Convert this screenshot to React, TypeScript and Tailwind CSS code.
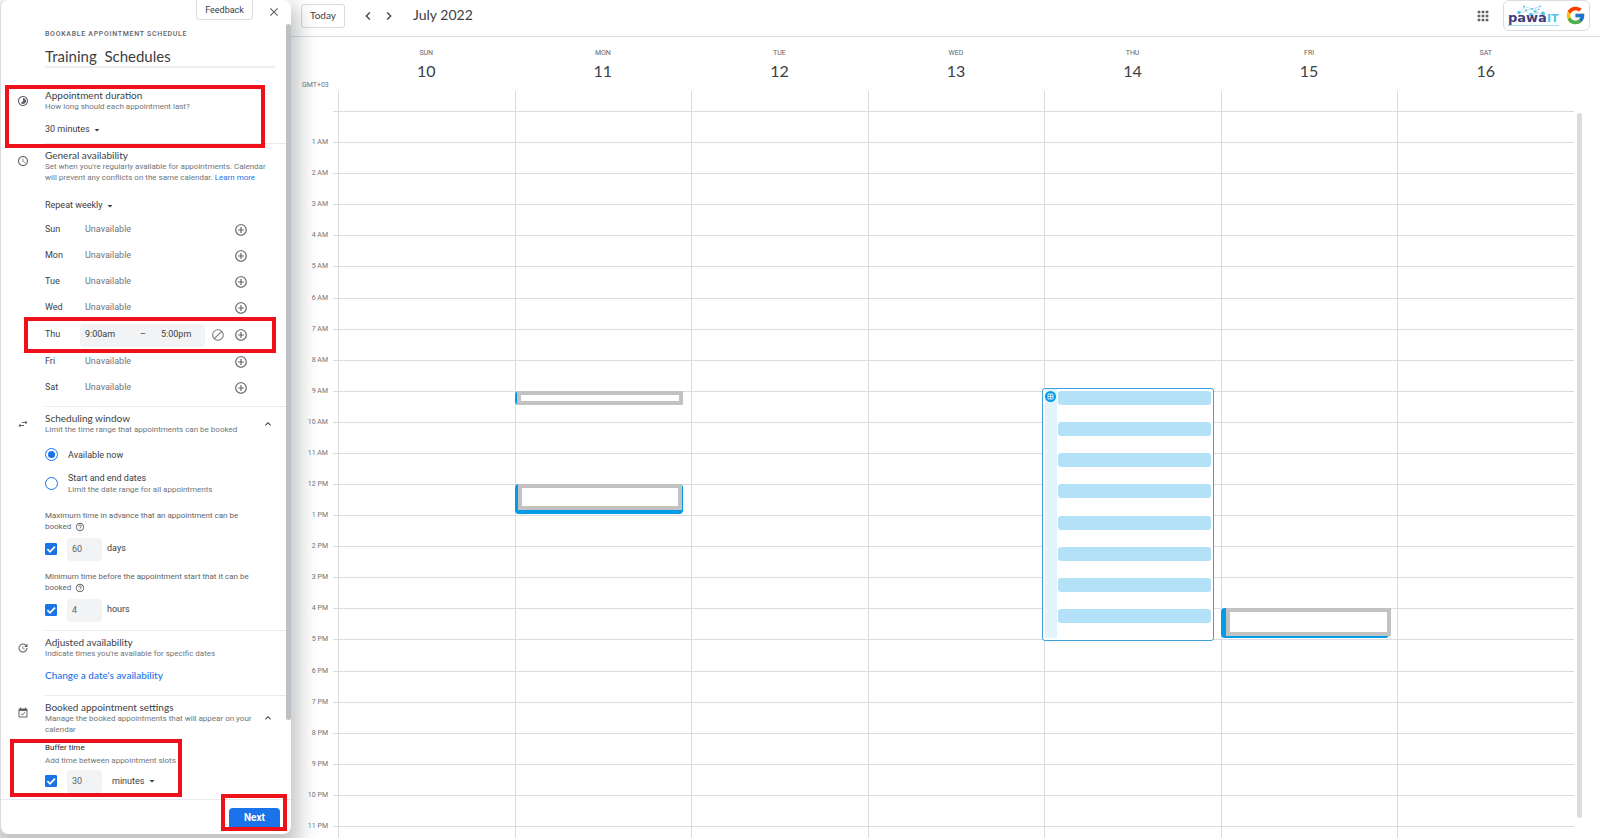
import { useState, type ReactNode } from "react";
import clsx from "clsx";
import { FcGoogle } from "react-icons/fc";
import {
  MdAccessTime,
  MdAddCircleOutline,
  MdApps,
  MdArrowDropDown,
  MdBlock,
  MdChevronLeft,
  MdChevronRight,
  MdClose,
  MdEventAvailable,
  MdExpandLess,
  MdHelpOutline,
  MdSwapHoriz,
  MdTimelapse,
  MdUpdate,
} from "react-icons/md";

/* ---------- Data ---------- */
const DAYS = [
  { name: "SUN", date: 10 },
  { name: "MON", date: 11 },
  { name: "TUE", date: 12 },
  { name: "WED", date: 13 },
  { name: "THU", date: 14 },
  { name: "FRI", date: 15 },
  { name: "SAT", date: 16 },
];

const WEEK = ["Sun", "Mon", "Tue", "Wed", "Thu", "Fri", "Sat"];

const HOURS = Array.from({ length: 24 }, (_, h) => {
  if (h === 0) return "";
  return `${h % 12 || 12} ${h < 12 ? "AM" : "PM"}`;
});

interface CalendarEvent {
  day: string;
  start: number;
  end: number;
  frame: string;
  inner: string;
}

const EVENTS: CalendarEvent[] = [
  { day: "MON", start: 9, end: 9.5, frame: "right-2 pl-0.5", inner: "" },
  { day: "MON", start: 12, end: 13, frame: "right-2 pl-[3px] pb-1 pr-px", inner: "" },
  { day: "FRI", start: 16, end: 17, frame: "right-2 pl-[5px] pb-0.5", inner: "-mr-0.5" },
];

const percent = (hours: number) => `${(hours / 24) * 100}%`;

/* ---------- Small parts ---------- */
function Highlight({ className }: { className: string }) {
  return (
    <div
      className={clsx("pointer-events-none absolute z-10 border-4 border-[#ee1119]", className)}
      aria-hidden="true"
    />
  );
}

function Section({
  icon,
  title,
  description,
  collapsible,
  className,
  children,
}: {
  icon: ReactNode;
  title: string;
  description: ReactNode;
  collapsible?: boolean;
  className?: string;
  children: ReactNode;
}) {
  return (
    <section className="relative flex gap-4 pl-4">
      <span className="mt-[11px] h-3 w-3 shrink-0 text-xs text-[#5f6368]">{icon}</span>
      <div className={clsx("min-w-0 flex-1 border-[#e8eaed] pt-[5px]", className)}>
        <div className="flex items-center justify-between pr-3">
          <div className="min-w-0 flex-1">
            <h2 className="font-['Lato','Liberation_Sans',sans-serif] text-[10px] leading-3 text-[#3c4043]">
              {title}
            </h2>
            <p className="text-[8px] leading-[11px] text-[#70757a]">{description}</p>
          </div>
          {collapsible && (
            <button type="button" aria-label={`Collapse ${title}`} className="text-xs text-[#3c4043]">
              <MdExpandLess />
            </button>
          )}
        </div>
        {children}
      </div>
    </section>
  );
}

function Dropdown({ label, options, className }: { label: string; options: string[]; className: string }) {
  return (
    <div className={clsx("relative flex h-[13px] items-center text-[#3c4043]", className)}>
      <select
        aria-label={label}
        className="h-[13px] w-full appearance-none bg-transparent text-[9px] leading-[13px] outline-none"
      >
        {options.map((o) => (
          <option key={o}>{o}</option>
        ))}
      </select>
      <MdArrowDropDown className="pointer-events-none absolute right-0 text-xs" />
    </div>
  );
}

function CheckBox({ label }: { label: string }) {
  const [checked, setChecked] = useState(true);
  return (
    <span className="relative flex h-3 w-3 shrink-0">
      <input
        type="checkbox"
        aria-label={label}
        checked={checked}
        onChange={(e) => setChecked(e.target.checked)}
        className="h-3 w-3 appearance-none rounded-[1px] border border-[#1a73e8] checked:bg-[#1a73e8]"
      />
      {checked && (
        <svg viewBox="0 0 12 12" className="pointer-events-none absolute inset-0 h-3 w-3">
          <path d="M2.4 6.2 5 8.8 10 3.6" fill="none" stroke="#fff" strokeWidth="1.8" />
        </svg>
      )}
    </span>
  );
}

function AmountRow({
  label,
  value,
  className,
  children,
}: {
  label: string;
  value: string;
  className: string;
  children: ReactNode;
}) {
  return (
    <div className={clsx("flex h-6 items-center text-[9px] text-[#3c4043]", className)}>
      <CheckBox label={label} />
      <input
        type="text"
        aria-label={`${label} value`}
        defaultValue={value}
        className="ml-2.5 h-[23px] w-[35px] rounded-sm bg-[#f1f3f4] pl-[5px] text-[9px] text-[#5f6368] outline-none"
      />
      {children}
    </div>
  );
}

function Radio({ name, id, defaultChecked }: { name: string; id: string; defaultChecked?: boolean }) {
  return (
    <input
      type="radio"
      name={name}
      id={id}
      defaultChecked={defaultChecked}
      className="h-[13px] w-[13px] shrink-0 appearance-none rounded-full border border-[#1a73e8] bg-white p-0.5 checked:bg-[#1a73e8] checked:bg-clip-content"
    />
  );
}

/* ---------- Side panel ---------- */
function WeekRow({ day }: { day: string }) {
  const open = day === "Thu";
  return (
    <li className={clsx("relative flex items-center text-[9px] text-[#5f6368]", open ? "h-7" : "h-[26px]")}>
      <span className={clsx("text-[#3c4043]", open ? "w-[35px]" : "w-10")}>{day}</span>
      {open ? (
        <>
          <div className="flex h-[23px] w-[125px] items-center rounded-sm bg-[#f1f3f4] pl-[5px] text-[#3c4043]">
            <input
              aria-label="Start time"
              defaultValue="9:00am"
              className="w-[55px] bg-transparent text-[9px] outline-none"
            />
            <span className="w-[21px]">–</span>
            <input
              aria-label="End time"
              defaultValue="5:00pm"
              className="w-[38px] bg-transparent text-[9px] outline-none"
            />
          </div>
          <button type="button" aria-label="Unavailable all day" className="ml-1.5 text-sm text-[#80868b]">
            <MdBlock />
          </button>
        </>
      ) : (
        <span className="text-[#70757a]">Unavailable</span>
      )}
      <button
        type="button"
        aria-label={`Add another period to ${day}`}
        className="mr-[38px] ml-auto text-sm text-[#5f6368]"
      >
        <MdAddCircleOutline />
      </button>
      {open && <Highlight className="-top-1 right-[10px] -left-[21px] h-9" />}
    </li>
  );
}

function HelpIcon() {
  return <MdHelpOutline className="ml-0.5 inline text-[10px] text-[#5f6368]" />;
}

function SchedulePanel() {
  return (
    <aside className="relative z-10 flex h-[calc(100vh-4px)] w-[291px] shrink-0 flex-col rounded-lg border-l border-[#dadce0] bg-white shadow-[0_12px_20px_8px_rgba(60,64,67,0.3)]">
      <div className="flex min-h-0 flex-1 overflow-hidden">
        <div className="min-w-0 flex-1">
          <div className="flex h-7 items-start justify-end gap-3.5">
            <button
              type="button"
              className="h-5 w-[57px] rounded-b border border-t-0 border-[#dadce0] text-[9px] leading-4 text-[#3c4043]"
            >
              Feedback
            </button>
            <button type="button" aria-label="Close" className="mt-[5px] mr-[5px] text-sm text-[#5f6368]">
              <MdClose />
            </button>
          </div>
          <div className="pr-[11px] pl-11">
            <label
              htmlFor="schedule-title"
              className="block text-[7px] leading-3 font-medium tracking-widest text-[#5f6368]"
            >
              BOOKABLE APPOINTMENT SCHEDULE
            </label>
            <input
              id="schedule-title"
              defaultValue="Training  Schedules"
              className="mt-[7px] block h-[21px] w-full border-b-2 border-[#eceef0] font-['Lato','Liberation_Sans',sans-serif] text-[15px] text-[#3c4043] outline-none"
            />
          </div>

          <div className="mt-4">
            <Section
              icon={<MdTimelapse />}
              title="Appointment duration"
              description="How long should each appointment last?"
              className="border-b pb-[7px]"
            >
              <Dropdown
                label="Appointment duration"
                options={["30 minutes", "45 minutes", "1 hour"]}
                className="mt-[11px] w-[58px]"
              />
              <Highlight className="top-px left-1 h-[63px] w-[260px]" />
            </Section>

            <Section
              icon={<MdAccessTime />}
              title="General availability"
              description={
                <>
                  Set when you&apos;re regularly available for appointments. Calendar
                  <br />
                  will prevent any conflicts on the same calendar.{" "}
                  <a href="#learn-more" className="text-[#1a73e8]">
                    Learn more
                  </a>
                </>
              }
              className="border-b pb-[5px]"
            >
              <Dropdown
                label="Repeat"
                options={["Repeat weekly", "Does not repeat", "Custom"]}
                className="mt-4 w-[71px]"
              />
              <ul className="mt-[5px]">
                {WEEK.map((day) => (
                  <WeekRow key={day} day={day} />
                ))}
              </ul>
            </Section>

            <Section
              icon={<MdSwapHoriz />}
              title="Scheduling window"
              description="Limit the time range that appointments can be booked"
              collapsible
              className="border-b pb-2"
            >
              <div className="mt-[13px] flex items-center gap-[10px]">
                <Radio name="window" id="window-now" defaultChecked />
                <label htmlFor="window-now" className="text-[9px] leading-3 text-[#3c4043]">
                  Available now
                </label>
              </div>
              <div className="mt-[11px] flex items-center gap-[10px]">
                <Radio name="window" id="window-dates" />
                <label htmlFor="window-dates" className="text-[9px] leading-3 text-[#3c4043]">
                  Start and end dates
                  <span className="block text-[8px] leading-[11px] text-[#70757a]">
                    Limit the date range for all appointments
                  </span>
                </label>
              </div>
              <p className="mt-[15px] pr-8 text-[8px] leading-[11px] text-[#5f6368]">
                Maximum time in advance that an appointment can be booked <HelpIcon />
              </p>
              <AmountRow label="Maximum time in advance" value="60" className="mt-[5px]">
                <span className="ml-[5px]">days</span>
              </AmountRow>
              <p className="mt-2.5 pr-7 text-[8px] leading-[11px] text-[#5f6368]">
                Minimum time before the appointment start that it can be booked <HelpIcon />
              </p>
              <AmountRow label="Minimum time before" value="4" className="mt-[5px]">
                <span className="ml-[5px]">hours</span>
              </AmountRow>
            </Section>

            <Section
              icon={<MdUpdate />}
              title="Adjusted availability"
              description="Indicate times you're available for specific dates"
              className="border-b pb-3.5"
            >
              <a
                href="#change-date"
                className="mt-[10px] block font-['Lato','Liberation_Sans',sans-serif] text-[10px] leading-3 font-medium text-[#1a73e8]"
              >
                Change a date&apos;s availability
              </a>
            </Section>

            <Section
              icon={<MdEventAvailable />}
              title="Booked appointment settings"
              description="Manage the booked appointments that will appear on your calendar"
              collapsible
            >
              <h3 className="mt-[7px] text-[8px] leading-3 text-[#202124]">Buffer time</h3>
              <p className="mt-px text-[8px] leading-3 text-[#70757a]">Add time between appointment slots</p>
              <AmountRow label="Buffer time" value="30" className="mt-0.5">
                <Dropdown label="Buffer unit" options={["minutes", "hours"]} className="ml-2.5 w-[46px]" />
              </AmountRow>
              <Highlight className="top-[43px] left-[9px] h-[58px] w-[172px]" />
            </Section>
          </div>
        </div>
        <div className="mt-6 w-[5px] shrink-0">
          <div className="h-[696px] rounded-full bg-[#bdc1c6]" />
        </div>
      </div>

      <footer className="flex h-[35px] shrink-0 justify-end border-t border-[#e8eaed] pt-1 pr-[11px]">
        <div className="relative">
          <button
            type="button"
            className="h-[22px] w-[51px] rounded-sm bg-[#1a73e8] pb-0.5 text-[10px] font-bold text-white"
          >
            Next
          </button>
          <Highlight className="-top-[10px] -left-2 h-[37px] w-[66px]" />
        </div>
      </footer>
    </aside>
  );
}

/* ---------- Calendar ---------- */
function PawaLogo() {
  return (
    <svg viewBox="0 0 52 22" className="h-[22px] w-[52px]" role="img" aria-label="pawa IT">
      <g stroke="#8fd3ee" strokeWidth="0.6" fill="none">
        <path d="M11 8 18 6 23 11 27 7 35 9M18 2 24 4 31 2M18 6 24 4 27 7 31 3M11 8 17 2M23 11 30 8M27 3 30 8" />
      </g>
      <g fill="#55c3ea">
        <circle cx="11" cy="7.500" r="1.7" />
        <circle cx="18" cy="5" r="1" />
        <circle cx="23" cy="9.500" r="1.8" />
        <circle cx="27" cy="6.500" r="1.3" />
        <circle cx="35" cy="8.500" r="2" />
        <circle cx="16" cy="1.500" r="1" />
        <circle cx="24" cy="4" r="0.9" />
        <circle cx="32" cy="1.300" r="0.9" />
        <circle cx="31" cy="4.500" r="0.8" />
      </g>
      <text x="0" y="17" fontSize="13" fontWeight="700" fill="#3f3d7d" fontFamily="DejaVu Sans, sans-serif">
        pawa
      </text>
      <text x="39" y="17" fontSize="11" fontWeight="700" fill="#55c3ea" fontFamily="DejaVu Sans, sans-serif">
        IT
      </text>
      <path d="M0 20.500H51" stroke="#8fd3ee" strokeWidth="1" strokeDasharray="2 .6" />
    </svg>
  );
}

function TopBar() {
  return (
    <header className="flex h-[37px] items-start border-b border-[#dadce0] pr-2.5 pl-[10px] text-[#3c4043]">
      <button
        type="button"
        className="mt-1 h-6 w-[44px] rounded-[3px] border border-[#dadce0] pb-0.5 font-['Lato','Liberation_Sans',sans-serif] text-[10px]"
      >
        Today
      </button>
      <button type="button" aria-label="Previous week" className="mt-2 ml-[15px] text-base">
        <MdChevronLeft />
      </button>
      <button type="button" aria-label="Next week" className="mt-2 ml-[5px] text-base">
        <MdChevronRight />
      </button>
      <h1 className="mt-[5px] ml-4 font-['Lato','Liberation_Sans',sans-serif] text-[14px] leading-5">
        July 2022
      </h1>
      <button type="button" aria-label="Google apps" className="mt-2 mr-3 ml-auto text-base text-[#5f6368]">
        <MdApps />
      </button>
      <div className="flex h-[31px] w-[87px] items-center justify-between rounded-md border border-[#dadce0] pr-[3px] pl-1">
        <PawaLogo />
        <FcGoogle className="text-[21px]" />
      </div>
    </header>
  );
}

function AppointmentBlock() {
  return (
    <div
      className="absolute right-[7px] -left-[3px] -mt-[3px] flex gap-px rounded-[3px] border border-[#3fa0dc] bg-white px-0.5"
      style={{ top: percent(9), height: `calc(${percent(8)} + 5px)` }}
    >
      <div className="mb-0.5 w-3 bg-[#e1f3fd] pt-0.5">
        <svg viewBox="0 0 11 11" className="h-[11px] w-[11px]">
          <circle cx="5.500" cy="5.500" r="5.500" fill="#039be5" />
          <path d="M3 3H8V8H3ZM5.500 3V8M3 5.500H8" fill="none" stroke="#fff" strokeWidth="0.8" />
        </svg>
      </div>
      <div className="grid flex-1 grid-rows-[repeat(8,minmax(0,1fr))] pt-0.5">
        {HOURS.slice(9, 17).map((h) => (
          <div key={h}>
            <div className="h-3.5 rounded-[3px] bg-[#b3e1f7]" />
          </div>
        ))}
      </div>
    </div>
  );
}

function WeekGrid() {
  return (
    <div className="grid">
      <div className="col-start-1 row-start-1 grid h-[766px] grid-rows-[repeat(24,minmax(0,1fr))] pt-5">
        {HOURS.map((label, i) => (
          <div key={i} className="flex gap-[5px]">
            <span className="-mt-1 w-[37px] text-right text-[7px] leading-2 text-[#70757a]">{label}</span>
            <div className="flex-1 border-t border-[#dadce0]" />
          </div>
        ))}
      </div>
      <div className="col-start-1 row-start-1 ml-[47px] grid grid-cols-7">
        {DAYS.map((day) => (
          <div key={day.name} className="border-l border-[#dadce0] pt-5">
            <div className="relative h-full">
              {EVENTS.filter((e) => e.day === day.name).map((e) => (
                <div
                  key={e.start}
                  className={clsx("absolute -left-px flex rounded-sm bg-[#039be5]", e.frame)}
                  style={{ top: percent(e.start), height: `calc(${percent(e.end - e.start)} - 1px)` }}
                >
                  <div className={clsx("flex-1 border-4 border-[#c2c2c2] bg-white", e.inner)} />
                </div>
              ))}
              {day.name === "THU" && <AppointmentBlock />}
            </div>
          </div>
        ))}
      </div>
    </div>
  );
}

export default function App() {
  return (
    <div className="flex h-screen overflow-hidden bg-white font-['Roboto','Liberation_Sans',sans-serif]">
      <SchedulePanel />
      <main className="min-w-0 flex-1">
        <TopBar />
        <div className="flex">
          <div className="min-w-0 flex-1">
            <div className="flex h-[54px]">
              <span className="w-[47px] self-end pb-0.5 pl-[11px] text-[7px] leading-2 text-[#70757a]">GMT+03</span>
              <div className="grid flex-1 grid-cols-7 text-center">
                {DAYS.map((day) => (
                  <div key={day.name} className="pt-[11px]">
                    <div className="text-[7px] leading-[10px] text-[#5f6368]">{day.name}</div>
                    <div className="mt-[3px] font-['Lato','Liberation_Sans',sans-serif] text-base leading-5 text-[#3c4043]">
                      {day.date}
                    </div>
                  </div>
                ))}
              </div>
            </div>
            <WeekGrid />
          </div>
          <div className="w-[26px] shrink-0 pt-[76px] pl-[3px]">
            <div className="h-[705px] w-[5px] rounded-full bg-[#dadce0]" />
          </div>
        </div>
      </main>
    </div>
  );
}
